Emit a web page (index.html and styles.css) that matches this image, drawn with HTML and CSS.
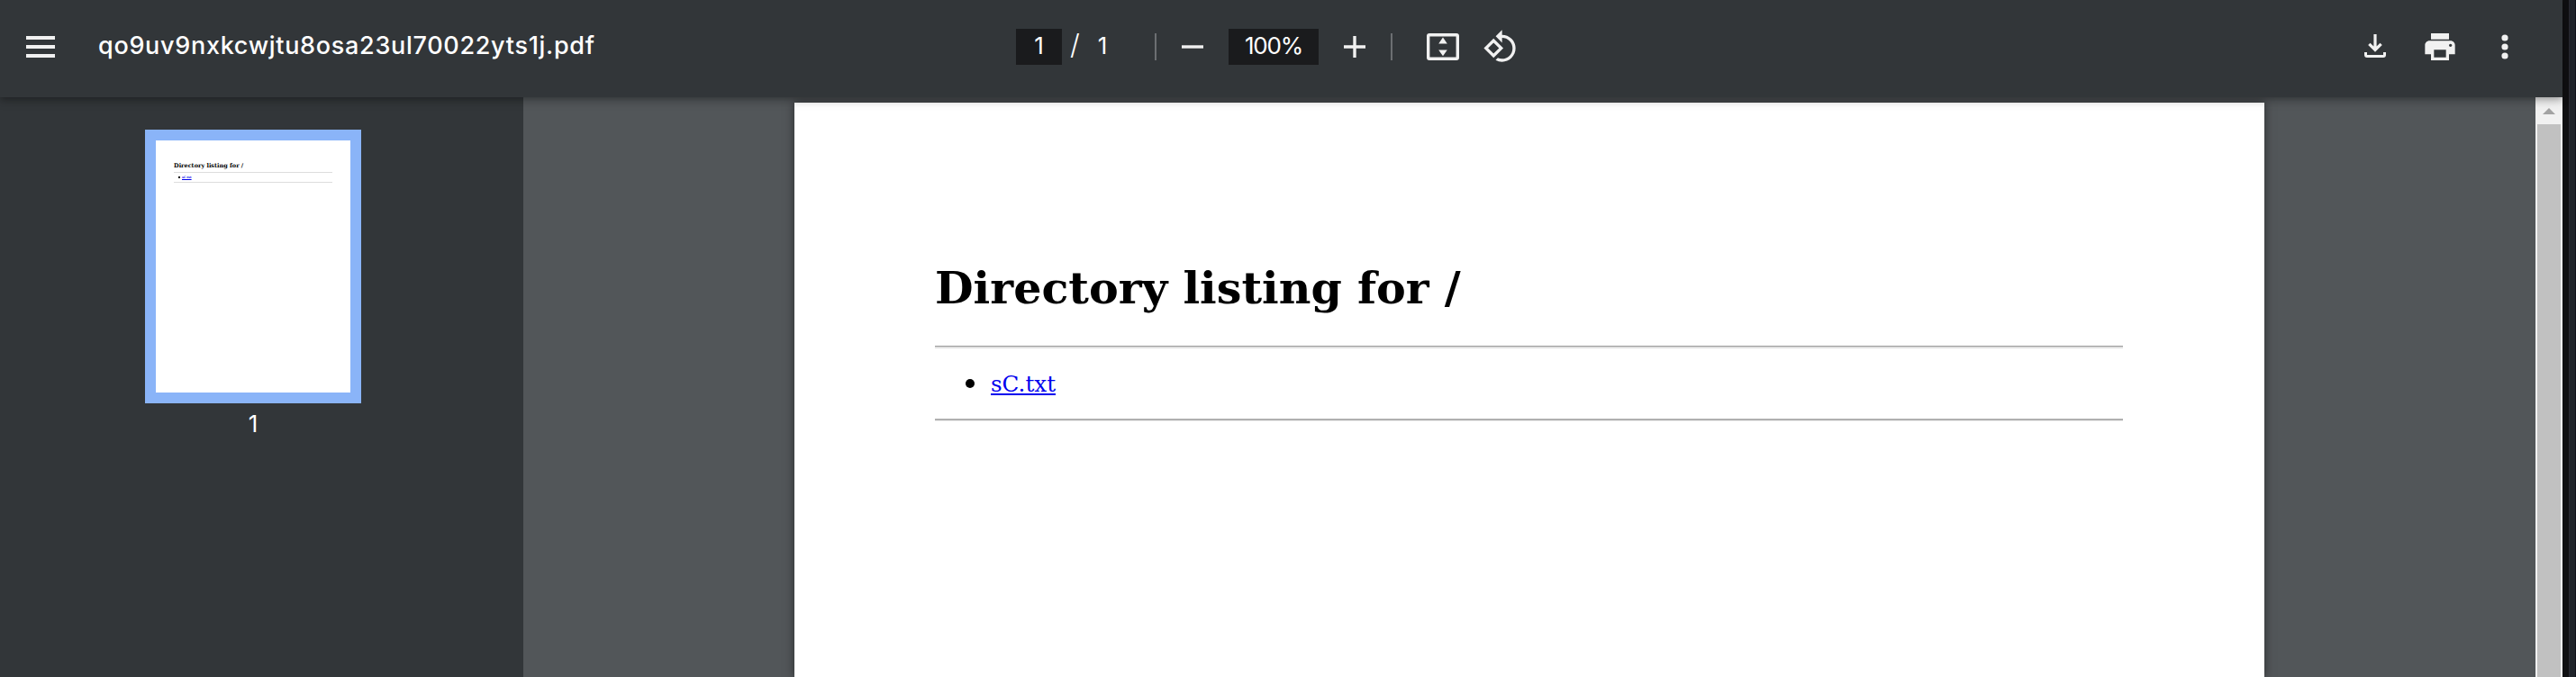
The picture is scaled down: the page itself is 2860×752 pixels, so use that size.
FILE: index.html
```html
<!DOCTYPE html>
<html lang="en">
<head>
<meta charset="utf-8">
<title>qo9uv9nxkcwjtu8osa23ul70022yts1j.pdf</title>
<link rel="stylesheet" href="styles.css">
</head>
<body>
<div class="viewer">
  <header class="toolbar">
    <div class="start">
      <svg class="icon" viewBox="0 0 20 20"><path d="M2 4h16v2H2zM2 9h16v2H2zM2 14h16v2H2z"/></svg>
      <span class="filename">qo9uv9nxkcwjtu8osa23ul70022yts1j.pdf</span>
    </div>
    <div class="center">
      <span class="field page-field">1</span>
      <span class="slash">/</span>
      <span class="total">1</span>
      <span class="separator"></span>
      <svg class="icon minus" viewBox="0 0 20 20"><path d="M4 9.150h12v1.700H4z"/></svg>
      <span class="field zoom-field">100%</span>
      <svg class="icon plus" viewBox="0 0 20 20"><path d="M4 9.150h12v1.700H4zM9.150 4h1.700v12h-1.700z"/></svg>
      <span class="separator second"></span>
      <svg class="icon fit" viewBox="0 0 20 20"><path fill-rule="evenodd" d="M2.500 2.500h15A1.500 1.500 0 0 1 19 4v12a1.500 1.500 0 0 1-1.500 1.500h-15A1.500 1.500 0 0 1 1 16V4a1.500 1.500 0 0 1 1.500-1.500zM2.700 4.200v11.600h14.600V4.200zM10 4.800l2.400 3.400H7.600zM7.600 11.700h4.800L10 15.100z"/></svg>
      <svg class="icon" viewBox="0 0 24 24"><path d="M7.340 6.410L.86 12.900l6.490 6.480 6.490-6.480-6.500-6.490zM3.690 12.900l3.660-3.660L11 12.900l-3.660 3.660-3.650-3.660zm15.670-6.260C17.610 4.880 15.300 4 13 4V.76L8.760 5 13 9.240V6c1.790 0 3.580.68 4.950 2.050 2.730 2.730 2.730 7.170 0 9.900C16.580 19.320 14.790 20 13 20c-.97 0-1.940-.21-2.840-.61l-1.490 1.490C10.020 21.620 11.510 22 13 22c2.300 0 4.610-.88 6.360-2.640 3.520-3.510 3.520-9.210 0-12.720z"/></svg>
    </div>
    <div class="end">
      <svg class="icon" viewBox="0 0 20 20"><path d="M9.200 3h1.600v6.800l1.950-1.950L13.900 9 10 12.900 6.100 9l1.150-1.150L9.200 9.800zM4 13h1.500v1.500h9V13H16v1.500a1.500 1.500 0 0 1-1.500 1.500h-9A1.500 1.500 0 0 1 4 14.500z"/></svg>
      <svg class="icon" viewBox="0 0 24 24"><path d="M19 8H5c-1.660 0-3 1.340-3 3v6h4v4h12v-4h4v-6c0-1.660-1.340-3-3-3zm-3 11H8v-5h8v5zm3-7c-.55 0-1-.45-1-1s.45-1 1-1 1 .45 1 1-.45 1-1 1zm-1-9H6v4h12V3z"/></svg>
      <svg class="icon" viewBox="0 0 20 20"><circle cx="10" cy="5" r="1.800"/><circle cx="10" cy="10" r="1.800"/><circle cx="10" cy="15" r="1.800"/></svg>
    </div>
  </header>
  <main class="content">
    <aside class="sidebar">
      <div class="thumb">
        <div class="thumb-title">Directory listing for /</div>
        <div class="thumb-list"><span class="thumb-dot"></span><span class="thumb-link">sC.txt</span></div>
      </div>
      <div class="thumb-number">1</div>
    </aside>
    <section class="canvas">
      <article class="page">
        <h1 class="title">Directory listing for /</h1>
        <div class="rule"></div>
        <div class="entry"><span class="dot"></span><a class="link" href="#">sC.txt</a></div>
        <div class="rule rule-soft"></div>
      </article>
    </section>
    <div class="scrollbar">
      <svg class="arrow" viewBox="0 0 14 7"><path d="M0 7L7 0l7 7z"/></svg>
      <div class="scroll-thumb"></div>
    </div>
  </main>
</div>
<div class="edge"></div>
</body>
</html>
```

FILE: styles.css
```css
* { box-sizing: border-box; }
body { margin: 0; width: 2860px; height: 752px; overflow: hidden; display: flex; background: #323639; }
.viewer { width: 2845px; height: 752px; display: flex; flex-direction: column; }
.toolbar { height: 108px; flex: none; display: grid; grid-template-columns: 1128px 1fr auto; align-items: center; padding-bottom: 4px; background: #323639; color: #fff; font-family: "Inter", sans-serif; font-size: 26px; position: relative; z-index: 2; box-shadow: 0 2px 8px rgba(0,0,0,.3), 0 4px 12px rgba(0,0,0,.12); }
.icon { width: 40px; height: 40px; fill: #f1f1f1; flex: none; display: block; }
.start { display: flex; align-items: center; padding-left: 25px; }
.filename { margin-left: 44px; white-space: nowrap; font-size: 27px; line-height: 40px; font-weight: 500; letter-spacing: .7px; padding-bottom: 2px; }
.center { display: flex; align-items: center; }
.field { height: 40px; line-height: 38px; background: #1a1b1d; text-align: center; }
.page-field { width: 51px; }
.slash { width: 29px; height: 40px; line-height: 36px; font-size: 31px; font-weight: 300; text-align: center; }
.total { width: 32px; height: 40px; line-height: 38px; text-align: center; }
.separator { width: 2px; height: 30px; background: #6c6f72; margin-left: 42px; }
.minus { margin-left: 20px; }
.zoom-field { width: 100px; margin-left: 20px; letter-spacing: -1.200px; }
.plus { margin-left: 20px; }
.second { margin-left: 20px; }
.fit { margin: 0 24px 0 36px; }
.end { display: flex; gap: 32px; padding-right: 44px; }
.content { flex: 1; min-height: 0; display: flex; background: #525659; }
.sidebar { width: 581px; flex: none; padding: 36px 0 0 161px; background: #323639; }
.thumb { width: 240px; height: 304px; border: 12px solid #8ab4f8; background: #fff; padding: 22px 20px; font-family: "DejaVu Serif", serif; }
.thumb-title { font-size: 6.500px; font-weight: bold; line-height: 12px; height: 13px; white-space: nowrap; }
.thumb-list { height: 12px; border: solid #ddd; border-width: 1px 0; display: flex; align-items: center; padding-left: 5px; }
.thumb-dot { width: 2px; height: 2px; background: #000; }
.thumb-link { font-size: 3.300px; font-weight: bold; color: #00e; text-decoration: underline; margin-left: 2px; }
.thumb-number { width: 240px; text-align: center; color: #fff; font: 26px/34px "Inter", sans-serif; padding-top: 6px; }
.canvas { flex: 1; padding: 6px 0 0 301px; overflow: hidden; }
.page { width: 1632px; height: 100%; background: #fff; box-shadow: 0 0 10px rgba(0,0,0,.5); padding: 174px 157px 0 156px; font-family: "DejaVu Serif", serif; color: #000; }
.title { margin: 0; font-size: 49.150px; line-height: 64px; height: 96px; font-weight: bold; white-space: nowrap; }
.rule { height: 3px; border-top: 1px solid #999; border-bottom: 2px solid #e0e0e0; }
.rule-soft { border-top: 2px solid #b0b0b0; border-bottom: 1px solid #eee; }
.entry { height: 78px; display: flex; align-items: center; padding-left: 34px; font-size: 24.600px; }
.dot { width: 10px; height: 10px; border-radius: 50%; background: #000; }
.link { margin-left: 18px; color: #00e; }
.scrollbar { width: 30px; background: #f1f1f1; display: flex; flex-direction: column; align-items: center; padding-top: 12px; }
.arrow { width: 14px; height: 7px; fill: #a3a3a3; flex: none; }
.scroll-thumb { margin-top: 11px; width: 26px; flex: 1; background: #c1c1c1; }
.edge { width: 15px; background: linear-gradient(90deg, #101012 0 7px, #2b2b32 7px 8px, #20242b 8px 14px, #11131c 14px); }
```
